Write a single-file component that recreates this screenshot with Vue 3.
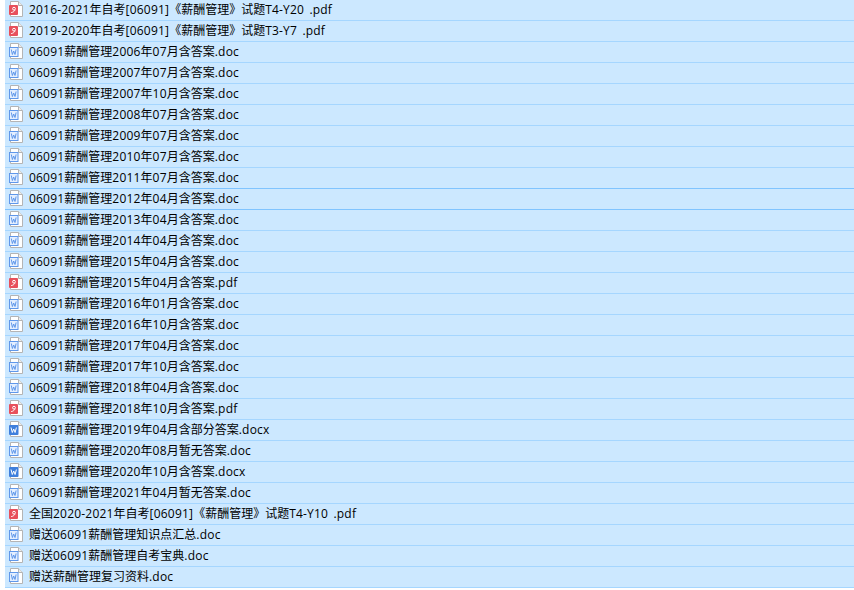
<script setup>
const rows = [
  ['pdf', '2016-2021年自考[06091]《薪酬管理》试题T4-Y20 .pdf'],
  ['pdf', '2019-2020年自考[06091]《薪酬管理》试题T3-Y7 .pdf'],
  ['doc', '06091薪酬管理2006年07月含答案.doc'],
  ['doc', '06091薪酬管理2007年07月含答案.doc'],
  ['doc', '06091薪酬管理2007年10月含答案.doc'],
  ['doc', '06091薪酬管理2008年07月含答案.doc'],
  ['doc', '06091薪酬管理2009年07月含答案.doc'],
  ['doc', '06091薪酬管理2010年07月含答案.doc'],
  ['doc', '06091薪酬管理2011年07月含答案.doc'],
  ['doc', '06091薪酬管理2012年04月含答案.doc'],
  ['doc', '06091薪酬管理2013年04月含答案.doc'],
  ['doc', '06091薪酬管理2014年04月含答案.doc'],
  ['doc', '06091薪酬管理2015年04月含答案.doc'],
  ['pdf', '06091薪酬管理2015年04月含答案.pdf'],
  ['doc', '06091薪酬管理2016年01月含答案.doc'],
  ['doc', '06091薪酬管理2016年10月含答案.doc'],
  ['doc', '06091薪酬管理2017年04月含答案.doc'],
  ['doc', '06091薪酬管理2017年10月含答案.doc'],
  ['doc', '06091薪酬管理2018年04月含答案.doc'],
  ['pdf', '06091薪酬管理2018年10月含答案.pdf'],
  ['docx', '06091薪酬管理2019年04月含部分答案.docx'],
  ['doc', '06091薪酬管理2020年08月暂无答案.doc'],
  ['docx', '06091薪酬管理2020年10月含答案.docx'],
  ['doc', '06091薪酬管理2021年04月暂无答案.doc'],
  ['pdf', '全国2020-2021年自考[06091]《薪酬管理》试题T4-Y10 .pdf'],
  ['doc', '赠送06091薪酬管理知识点汇总.doc'],
  ['doc', '赠送06091薪酬管理自考宝典.doc'],
  ['doc', '赠送薪酬管理复习资料.doc'],
]

// latin runs are a touch wider than the font gives, CJK stays on the 12px grid
const files = rows.map(([type, name]) => ({
  type,
  runs: name.split(/([\x20-\x7e]+)/).filter(Boolean).map((text) => ({
    text,
    latin: /^[\x20-\x7e]/.test(text),
  })),
}))
</script>

<template>
  <ul class="file-list">
    <li v-for="(file, i) in files" :key="i" class="row" :class="{ strong: i === 8 || i === 9 }">
      <svg class="icon" width="16" height="16" viewBox="0 0 16 16">
        <path d="M2.5 .5H10.5L14.5 4.5V15.5H2.5Z" fill="#fff" stroke="#b4b4b4" />
        <path d="M10.5 .5V4.5H14.5" fill="#ececec" stroke="#b4b4b4" />
        <template v-if="file.type === 'pdf'">
          <rect x="1" y="4" width="9" height="10" rx="1" fill="#e8505b" />
          <circle cx="6" cy="7.7" r="1.4" fill="none" stroke="#fff" />
          <path d="M7 9.2C6 10.6 5 11.2 3.2 11.6" fill="none" stroke="#fff" />
        </template>
        <template v-else-if="file.type === 'docx'">
          <rect x="1" y="4" width="9.5" height="10" rx="1" fill="#3f7fdc" />
          <path d="M3 6.5L4.3 11.5L5.7 8L7.1 11.5L8.4 6.5" fill="none" stroke="#fff" />
        </template>
        <template v-else>
          <rect x="1.5" y="4.5" width="8.5" height="9" fill="#e4efff" stroke="#5f97ea" />
          <path d="M3.3 6.5L4.4 11.5L5.7 8L7 11.5L8.1 6.5" fill="none" stroke="#5f97ea" />
        </template>
      </svg>
      <span class="name"><span v-for="(run, j) in file.runs" :key="j" :class="{ latin: run.latin }">{{ run.text }}</span></span>
    </li>
  </ul>
</template>

<style scoped>
.file-list {
  list-style: none;
  margin: 0;
  padding: 0 0 0 5px;
}

.row {
  display: flex;
  align-items: center;
  box-sizing: border-box;
  height: 21px;
  background: #cce8ff;
  border-bottom: 1px solid #a5d6ff;
  padding: 0 0 2px 3px;
  font-family: "Open Sans", "Noto Sans CJK SC", sans-serif;
  font-size: 12px;
  color: #000;
}

.row.strong {
  border-bottom-color: #80c4ff;
}

.icon {
  flex: none;
  margin-right: 5px;
}

.name {
  white-space: pre;
}

.latin {
  letter-spacing: 0.2px;
  word-spacing: 2px;
}
</style>
